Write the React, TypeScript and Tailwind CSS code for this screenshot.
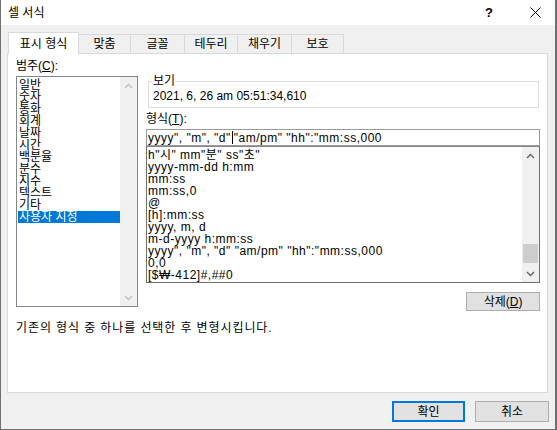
import React from "react";

// ─── Data ─────────────────────────────────────────────────────────────────────

const CATEGORIES = [
  "일반",
  "숫자",
  "통화",
  "회계",
  "날짜",
  "시간",
  "백분율",
  "분수",
  "지수",
  "텍스트",
  "기타",
  "사용자 지정",
];

const FORMATS = [
  'h"시" mm"분" ss"초"',
  "yyyy-mm-dd h:mm",
  "mm:ss",
  "mm:ss,0",
  "@",
  "[h]:mm:ss",
  "yyyy, m, d",
  "m-d-yyyy h:mm:ss",
  'yyyy", "m", "d" "am/pm" "hh":"mm:ss,000',
  "0,0",
  "[$₩-412]#,##0",
];

const TABS = [
  { label: "표시 형식", w: "w-[71px]" },
  { label: "맞춤", w: "w-[52px]" },
  { label: "글꼴", w: "w-[54px]" },
  { label: "테두리", w: "w-[53px]" },
  { label: "채우기", w: "w-[54px]" },
  { label: "보호", w: "w-[52px]" },
];

// ─── Bits ─────────────────────────────────────────────────────────────────────

function Chevron({ up, color }: { up?: boolean; color: string }) {
  return (
    <svg width="9" height="6" viewBox="0 0 9 6" fill="none">
      <path
        d={up ? "M1 5 L4.5 1.5 L8 5" : "M1 1 L4.5 4.5 L8 1"}
        stroke={color}
        strokeWidth="1.3"
      />
    </svg>
  );
}

function ScrollBar({ dark, thumb }: { dark?: boolean; thumb?: boolean }) {
  const c = dark ? "#606060" : "#bfbfbf";
  return (
    <div className="w-[17px] h-full bg-[#f0f0f0] flex flex-col shrink-0">
      <div className="h-[17px] flex items-center justify-center">
        <Chevron up color={c} />
      </div>
      <div className="flex-1 flex flex-col items-center">
        <div className="flex-1" />
        {thumb && <div className="w-[15px] h-[19px] bg-[#cdcdcd] mb-[2px]" />}
      </div>
      <div className="h-[17px] flex items-center justify-center">
        <Chevron color={c} />
      </div>
    </div>
  );
}

// ─── Page ─────────────────────────────────────────────────────────────────────

export default function App() {
  return (
    <div className="w-[557px] h-[430px] bg-[#f0f0f0] border-l border-r-2 border-b border-[#707070] flex flex-col text-[12px] text-black font-['Liberation_Sans','Noto_Sans_CJK_KR',sans-serif]">
      {/* Title bar */}
      <div className="h-[25px] bg-white flex items-center pl-[7px] shrink-0">
        <span className="leading-[14px]">셀 서식</span>
        <div className="flex-1" />
        <span className="text-[13px] font-bold leading-[14px] mr-[37px]">?</span>
        <svg width="11" height="11" viewBox="0 0 11 11" className="mr-[14px]">
          <path d="M0.5 0.5 L10.5 10.5 M10.5 0.5 L0.5 10.5" stroke="#000" strokeWidth="1" />
        </svg>
      </div>

      {/* Tabs */}
      <div className="mt-[7px] pl-[7px] flex items-end h-[22px] -mb-px relative z-10 shrink-0">
        {TABS.map((t, i) =>
          i === 0 ? (
            <div
              key={t.label}
              className={`${t.w} h-[22px] bg-white border-l border-t border-r border-[#d9d9d9] flex items-center justify-center leading-[14px]`}
            >
              {t.label}
            </div>
          ) : (
            <div
              key={t.label}
              className={`${t.w} h-[20px] bg-[#f0f0f0] border-t border-r border-b border-[#d9d9d9] flex items-center justify-center leading-[14px]`}
            >
              {t.label}
            </div>
          )
        )}
      </div>

      {/* Panel */}
      <div className="ml-[6px] w-[541px] h-[340px] bg-white border border-[#d9d9d9] shrink-0">
        <div className="flex items-start pl-[8px]">
          {/* Category list */}
          <div className="w-[122px] pt-[5px]">
            <div className="leading-[14px] mb-[3px]">
              범주(<span className="underline">C</span>):
            </div>
            <div className="h-[231px] border border-[#828790] flex">
              <div className="flex-1 pt-[2px] pl-[1px]">
                {CATEGORIES.map((c, i) => (
                  <div
                    key={c}
                    className={
                      i === CATEGORIES.length - 1
                        ? "h-[12px] leading-[12px] pl-[1px] bg-[#0078d7] text-white whitespace-nowrap"
                        : "h-[12px] leading-[12px] pl-[1px] whitespace-nowrap"
                    }
                  >
                    {c}
                  </div>
                ))}
              </div>
              <ScrollBar />
            </div>
          </div>

          {/* Right side */}
          <div className="ml-[8px] w-[394px] flex flex-col">
            <fieldset className="mt-[20px] ml-[2px] w-[391px] border border-[#dcdcdc] px-[3px] pb-[4px]">
              <legend className="px-[1px] leading-[14px]">보기</legend>
              <div className="mt-[1px] pl-[1px] leading-[14px]">2021, 6, 26 am 05:51:34,610</div>
            </fieldset>

            <div className="mt-[4px] leading-[14px]">
              형식(<span className="underline">T</span>):
            </div>
            <div className="mt-[3px] h-[17px] border border-[#9a9a9a] flex items-center pl-[1px] whitespace-nowrap leading-[14px] tracking-[0.5px]">
              yyyy", "m", "d"
              <span className="inline-block w-px h-[13px] bg-black mx-px" />
              "am/pm" "hh":"mm:ss,000
            </div>
            <div className="h-[137px] border border-[#6f6f6f] border-t-[#828790] flex">
              <div className="flex-1 pt-[2px] pl-[1px] overflow-hidden tracking-[0.5px]">
                {FORMATS.map((f) => (
                  <div key={f} className="h-[12px] leading-[12px] whitespace-nowrap">
                    {f}
                  </div>
                ))}
              </div>
              <ScrollBar dark thumb />
            </div>

            <button className="mt-[9px] ml-auto w-[74px] h-[19px] bg-[#e1e1e1] border border-[#adadad] flex items-center justify-center leading-[14px]">
              삭제(<span className="underline">D</span>)
            </button>
          </div>
        </div>

        <div className="mt-[10px] pl-[8px] leading-[14px] tracking-[0.9px]">
          기존의 형식 중 하나를 선택한 후 변형시킵니다.
        </div>
      </div>

      {/* Buttons */}
      <div className="mt-[8px] flex justify-end gap-[10px] pr-[6px]">
        <button className="w-[73px] h-[21px] bg-[#e1e1e1] border-2 border-[#0078d7] flex items-center justify-center leading-[14px]">
          확인
        </button>
        <button className="w-[74px] h-[21px] bg-[#e1e1e1] border border-[#adadad] flex items-center justify-center leading-[14px]">
          취소
        </button>
      </div>
    </div>
  );
}
